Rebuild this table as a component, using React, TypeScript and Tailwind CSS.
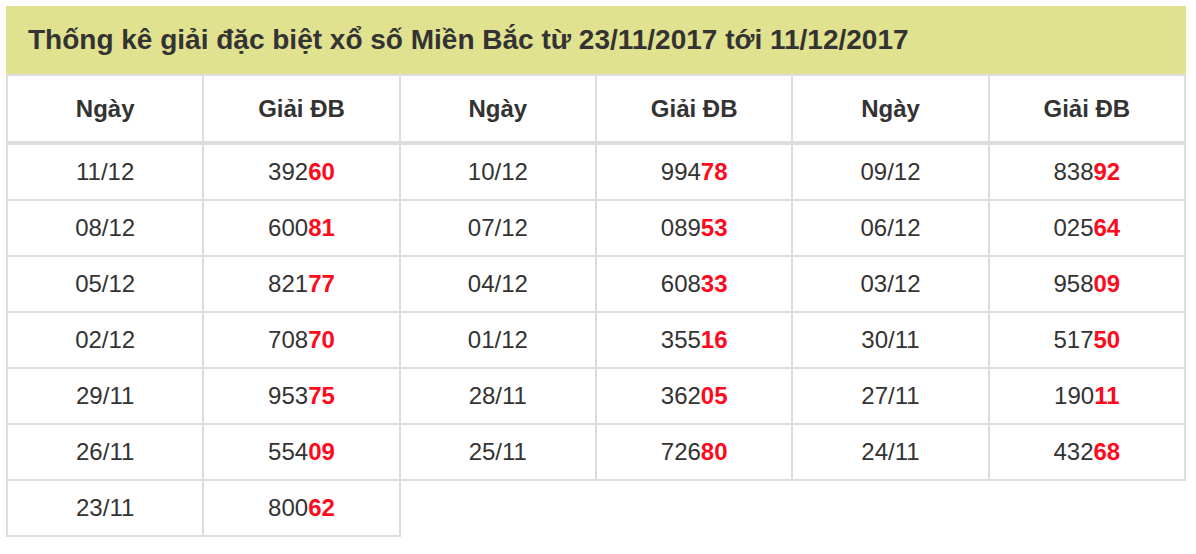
const rows: [string, string][] = [
  ["11/12", "39260"],
  ["10/12", "99478"],
  ["09/12", "83892"],
  ["08/12", "60081"],
  ["07/12", "08953"],
  ["06/12", "02564"],
  ["05/12", "82177"],
  ["04/12", "60833"],
  ["03/12", "95809"],
  ["02/12", "70870"],
  ["01/12", "35516"],
  ["30/11", "51750"],
  ["29/11", "95375"],
  ["28/11", "36205"],
  ["27/11", "19011"],
  ["26/11", "55409"],
  ["25/11", "72680"],
  ["24/11", "43268"],
  ["23/11", "80062"],
];

const Prize = ({ value }: { value: string }) => (
  <>
    {value.slice(0, 3)}
    <span className="font-bold text-[#ff0a1c]">{value.slice(3)}</span>
  </>
);

const App = () => {
  return (
    <div className="min-h-screen bg-white p-[6px] font-['Liberation_Sans',Arial,sans-serif] text-[#333]">
      <div className="w-[1180px]">
        <div className="flex h-[68px] items-center bg-[#e1e28f] pl-[22px]">
          <h2 className="text-[28px] font-bold">
            Thống kê giải đặc biệt xổ số Miền Bắc từ 23/11/2017 tới 11/12/2017
          </h2>
        </div>
        <div className="grid grid-cols-6 border-l-2 border-t-2 border-[#ddd]">
          {[0, 1, 2].map((i) => (
            <div key={i} className="contents">
              <div className="flex h-[69px] items-center justify-center border-b-4 border-r-2 border-[#ddd] text-[24px] font-bold">
                Ngày
              </div>
              <div className="flex h-[69px] items-center justify-center border-b-4 border-r-2 border-[#ddd] text-[24px] font-bold">
                Giải ĐB
              </div>
            </div>
          ))}
          {rows.map(([day, prize]) => (
            <div key={day} className="contents">
              <div className="flex h-[56px] items-center justify-center border-b-2 border-r-2 border-[#ddd] text-[24px]">
                {day}
              </div>
              <div className="flex h-[56px] items-center justify-center border-b-2 border-r-2 border-[#ddd] text-[24px]">
                <Prize value={prize} />
              </div>
            </div>
          ))}
        </div>
      </div>
    </div>
  );
};

export default App;
